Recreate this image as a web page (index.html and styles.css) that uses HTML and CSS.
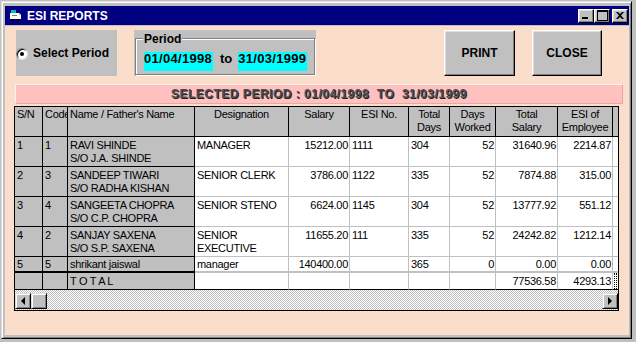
FILE: index.html
```html
<!DOCTYPE html>
<html lang="en">
<head>
    <meta charset="UTF-8">
    <title>ESI REPORTS</title>
    <link rel="stylesheet" href="styles.css">
</head>
<body>
    <div class="window">
        <div class="titlebar">
            <svg class="app-icon" width="13" height="11" viewBox="0 0 13 11">
                <rect x="1" y="0" width="5" height="3" fill="#00c0c0"/>
                <path d="M0 3h9l2 2v4H0z" fill="#fff"/>
                <path d="M9 3l2 2h-2z" fill="#c0c0c0"/>
                <rect x="1" y="9" width="3" height="2" fill="#000"/>
                <rect x="7" y="9" width="3" height="2" fill="#000"/>
                <rect x="2" y="5" width="5" height="1" fill="#808080"/>
            </svg>
            <span class="title">ESI REPORTS</span>
            <div class="caption-buttons">
                <span class="cap-btn btn-min"></span>
                <span class="cap-btn btn-max"></span>
                <span class="cap-btn btn-close">
                    <svg width="8" height="7" viewBox="0 0 8 7"><path d="M0 0h2l2 2 2-2h2L5 3.5 8 7H6L4 5 2 7H0l3-3.5z" fill="#000"/></svg>
                </span>
            </div>
        </div>

        <div class="client">
            <div class="toolbar">
                <div class="select-box">
                    <span class="radio"></span>
                    <span>Select Period</span>
                </div>
                <div class="period-panel">
                    <div class="group">
                        <span class="group-label">Period</span>
                        <span class="date-field">01/04/1998</span>
                        <span class="to">to</span>
                        <span class="date-field">31/03/1999</span>
                    </div>
                </div>
                <button class="push-btn btn-print">PRINT</button>
                <button class="push-btn">CLOSE</button>
            </div>

            <div class="period-banner">SELECTED PERIOD : 01/04/1998  TO  31/03/1999</div>

            <div class="grid">
                <table>
                    <colgroup>
                        <col class="c-sn"><col class="c-code"><col class="c-name"><col class="c-desig">
                        <col class="c-salary"><col class="c-esino"><col class="c-tdays"><col class="c-wdays">
                        <col class="c-tsal"><col class="c-esi"><col class="c-end">
                    </colgroup>
                    <thead>
                        <tr>
                            <th class="left">S/N</th>
                            <th class="left">Code</th>
                            <th class="left">Name / Father's Name</th>
                            <th>Designation</th>
                            <th>Salary</th>
                            <th>ESI No.</th>
                            <th>Total<br>Days</th>
                            <th>Days<br>Worked</th>
                            <th>Total<br>Salary</th>
                            <th>ESI of<br>Employee</th>
                            <th></th>
                        </tr>
                    </thead>
                    <tbody>
                        <tr>
                            <td class="fixed">1</td><td class="fixed">1</td>
                            <td class="fixed">RAVI SHINDE<br>S/O J.A. SHINDE</td>
                            <td>MANAGER</td><td class="num">15212.00</td><td>1111</td><td>304</td>
                            <td class="num">52</td><td class="num">31640.96</td><td class="num">2214.87</td><td></td>
                        </tr>
                        <tr>
                            <td class="fixed">2</td><td class="fixed">3</td>
                            <td class="fixed">SANDEEP TIWARI<br>S/O RADHA KISHAN</td>
                            <td>SENIOR CLERK</td><td class="num">3786.00</td><td>1122</td><td>335</td>
                            <td class="num">52</td><td class="num">7874.88</td><td class="num">315.00</td><td></td>
                        </tr>
                        <tr>
                            <td class="fixed">3</td><td class="fixed">4</td>
                            <td class="fixed">SANGEETA CHOPRA<br>S/O C.P. CHOPRA</td>
                            <td>SENIOR STENO</td><td class="num">6624.00</td><td>1145</td><td>304</td>
                            <td class="num">52</td><td class="num">13777.92</td><td class="num">551.12</td><td></td>
                        </tr>
                        <tr>
                            <td class="fixed">4</td><td class="fixed">2</td>
                            <td class="fixed">SANJAY SAXENA<br>S/O S.P. SAXENA</td>
                            <td>SENIOR<br>EXECUTIVE</td><td class="num">11655.20</td><td>111</td><td>335</td>
                            <td class="num">52</td><td class="num">24242.82</td><td class="num">1212.14</td><td></td>
                        </tr>
                        <tr class="short">
                            <td class="fixed">5</td><td class="fixed">5</td>
                            <td class="fixed">shrikant jaiswal</td>
                            <td>manager</td><td class="num">140400.00</td><td></td><td>365</td>
                            <td class="num">0</td><td class="num">0.00</td><td class="num">0.00</td><td></td>
                        </tr>
                        <tr class="total">
                            <td class="fixed"></td><td class="fixed"></td>
                            <td class="fixed">T O T A L</td>
                            <td></td><td></td><td></td><td></td><td></td>
                            <td class="num">77536.58</td><td class="num">4293.13</td><td class="focus"></td>
                        </tr>
                    </tbody>
                </table>
                <div class="hscroll">
                    <span class="scroll-btn arrow-left"></span>
                    <span class="scroll-thumb"></span>
                    <span class="scroll-btn arrow-right"></span>
                </div>
            </div>
        </div>
    </div>
</body>
</html>
```

FILE: styles.css
```css
* {
    box-sizing: border-box;
    margin: 0;
    padding: 0;
}

body {
    width: 636px;
    height: 342px;
    overflow: hidden;
    background: #c0c0c0;
    font-family: "Liberation Sans", Arial, sans-serif;
    color: #000;
}

.window {
    display: flex;
    flex-direction: column;
    width: 631px;
    height: 338px;
    margin: 1px;
    padding: 4px 2px 3px 3px;
    background: #c0c0c0;
    border: 1px solid;
    border-color: #dfdfdf #000 #000 #dfdfdf;
    box-shadow: inset 1px 1px #fff, inset -1px -1px #808080;
}

/* title bar */
.titlebar {
    display: flex;
    align-items: center;
    height: 19px;
    margin-bottom: 1px;
    padding: 0 1px 0 5px;
    background: #000080;
}

.app-icon {
    margin-right: 4px;
}

.title {
    color: #fff;
    font-size: 12px;
    font-weight: bold;
}

.caption-buttons {
    display: flex;
    margin-left: auto;
}

.cap-btn {
    position: relative;
    display: flex;
    align-items: center;
    justify-content: center;
    width: 16px;
    height: 14px;
    background: #c0c0c0;
    border: 1px solid;
    border-color: #fff #000 #000 #fff;
    box-shadow: inset -1px -1px #808080, inset 1px 1px #dfdfdf;
}

.btn-min::after {
    content: "";
    position: absolute;
    left: 3px;
    bottom: 3px;
    width: 6px;
    height: 2px;
    background: #000;
}

.btn-max::after {
    content: "";
    width: 9px;
    height: 8px;
    border: 1px solid #000;
    border-top-width: 2px;
}

.btn-close {
    margin-left: 2px;
}

/* client area */
.client {
    flex: 1;
    padding-top: 4px;
    background: repeating-conic-gradient(#f8d9c4 0 25%, #fde2d2 0 50%) 0 0 / 2px 2px;
}

.toolbar {
    display: flex;
    height: 46px;
    padding: 0 27px 0 11px;
}

.select-box {
    display: flex;
    align-items: center;
    width: 101px;
    margin-right: 17px;
    background: #c0c0c0;
    font-size: 12px;
    font-weight: bold;
}

.radio {
    position: relative;
    width: 12px;
    height: 12px;
    margin: 1px 5px 0 0;
    border-radius: 50%;
    background: #fff;
    border: 1px solid;
    border-color: #808080 #dfdfdf #dfdfdf #808080;
    box-shadow: inset 1px 1px #000;
}

.radio::after {
    content: "";
    position: absolute;
    left: 3px;
    top: 3px;
    width: 4px;
    height: 4px;
    border-radius: 50%;
    background: #000;
}

.period-panel {
    width: 182px;
    padding: 8px 1px 1px 1px;
    background: #c0c0c0;
}

.group {
    position: relative;
    display: flex;
    align-items: flex-start;
    height: 37px;
    padding: 13px 0 0 8px;
    border: 1px solid #808080;
    box-shadow: inset 1px 1px #fff, 1px 1px #fff;
}

.group-label {
    position: absolute;
    left: 7px;
    top: -7px;
    padding: 0 1px;
    background: #c0c0c0;
    font-size: 12px;
    font-weight: bold;
    line-height: 14px;
}

.date-field {
    width: 69px;
    height: 19px;
    padding: 0 0 5px 0;
    background: #00ffff;
    font-size: 13px;
    font-weight: bold;
    letter-spacing: 0.3px;
    line-height: 14px;
    white-space: nowrap;
}

.to {
    margin: 0 6px 0 7px;
    font-size: 13px;
    font-weight: bold;
    line-height: 14px;
}

.push-btn {
    width: 70px;
    height: 46px;
    background: #c0c0c0;
    border: 1px solid;
    border-color: #fff #000 #000 #fff;
    box-shadow: inset -1px -1px #808080, inset 1px 1px #dfdfdf;
    font-family: inherit;
    font-size: 12px;
    font-weight: bold;
    color: #000;
}

.btn-print {
    width: 71px;
    margin: 0 17px 0 auto;
}

.period-banner {
    height: 20px;
    margin: 8px 6px 0 10px;
    background: #ffc0c0;
    border: 1px solid;
    border-color: #fff0f0 #e8a8a8 #e8a8a8 #fff0f0;
    color: #505050;
    text-shadow: 1px 1px 0 #202020;
    font-size: 12px;
    font-weight: bold;
    letter-spacing: 0.5px;
    line-height: 18px;
    text-align: center;
    white-space: pre;
}

/* flex grid */
.grid {
    width: 605px;
    margin: 2px 0 0 9px;
    border: 1px solid #000;
    background: #fff;
}

table {
    width: 603px;
    table-layout: fixed;
    border-collapse: separate;
    border-spacing: 0;
    font-size: 11px;
    letter-spacing: -0.3px;
}

.c-sn { width: 28px; }
.c-code { width: 25px; }
.c-name { width: 127px; }
.c-desig { width: 94px; }
.c-salary { width: 61px; }
.c-esino { width: 59px; }
.c-tdays { width: 41px; }
.c-wdays { width: 46px; }
.c-tsal { width: 62px; }
.c-esi { width: 55px; }
.c-end { width: 5px; }

th, td {
    padding: 2px 1px 1px 2px;
    border-right: 1px solid #c0c0c0;
    border-bottom: 1px solid #c0c0c0;
    line-height: 13px;
    text-align: left;
    vertical-align: top;
    white-space: nowrap;
    overflow: hidden;
}

th {
    padding: 1px 1px 2px 1px;
    background: #c0c0c0;
    border-color: #000;
    font-weight: normal;
    text-align: center;
}

th.left {
    padding-left: 2px;
    text-align: left;
}

td.fixed {
    background: #c0c0c0;
    border-color: #000;
}

td.num {
    text-align: right;
}

th:last-child, td:last-child {
    border-right: none;
}

tr.short td {
    padding-top: 1px;
    padding-bottom: 0;
}

tr.total td {
    border-top: 1px solid #c0c0c0;
    border-bottom-color: #000;
}

tr.total td.fixed {
    border-top-color: #000;
}

td.focus {
    outline: 1px dotted #000;
    outline-offset: -2px;
}

.hscroll {
    display: flex;
    align-items: flex-end;
    height: 20px;
    padding-bottom: 1px;
    background: repeating-conic-gradient(#c0c0c0 0 25%, #fff 0 50%) 0 0 / 2px 2px;
}

.scroll-btn, .scroll-thumb {
    display: flex;
    align-items: center;
    justify-content: center;
    width: 16px;
    height: 16px;
    background: #c0c0c0;
    border: 1px solid;
    border-color: #dfdfdf #000 #000 #dfdfdf;
    box-shadow: inset 1px 1px #fff, inset -1px -1px #808080;
}

.scroll-btn::before {
    content: "";
    border-top: 4px solid transparent;
    border-bottom: 4px solid transparent;
}

.arrow-left::before {
    border-right: 4px solid #000;
}

.arrow-right {
    margin-left: auto;
}

.arrow-right::before {
    border-left: 4px solid #000;
}
```
